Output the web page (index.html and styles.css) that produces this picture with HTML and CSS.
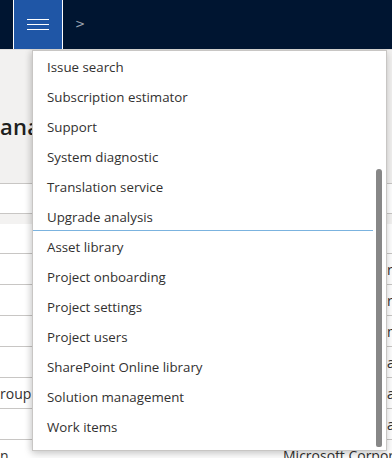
FILE: index.html
```html
<!DOCTYPE html>
<html>
<head>
<meta charset="utf-8">
<link rel="stylesheet" href="styles.css">
</head>
<body>
<header class="topbar">
  <button class="nav-btn" aria-label="Navigation">
    <svg width="22" height="12" viewBox="0 0 22 12"><path d="M0 0.5H22M0 5.5H22M0 10.5H22" stroke="#fff" stroke-width="1.2"/></svg>
  </button>
  <span class="crumb">&gt;</span>
</header>
<main class="page">
  <section class="title-area">
    <h1 class="title">anagement</h1>
  </section>
  <div class="grid">
    <div class="row"><span class="c1"></span><span class="c2"></span></div>
    <div class="row head"><span class="c1"></span><span class="c2"></span></div>
    <div class="row"><span class="c1"></span><span class="c2">rT</span></div>
    <div class="row"><span class="c1"></span><span class="c2">rT</span></div>
    <div class="row"><span class="c1"></span><span class="c2">m</span></div>
    <div class="row"><span class="c1"></span><span class="c2">a</span></div>
    <div class="row"><span class="c1">roup</span><span class="c2">a</span></div>
    <div class="row"><span class="c1"></span><span class="c2">a</span></div>
    <div class="row last"><span class="c1">n</span><span class="c2 vendor">Microsoft Corporation</span></div>
  </div>

  <nav class="menu">
    <ul class="group first">
      <li>Issue search</li>
      <li>Subscription estimator</li>
      <li>Support</li>
      <li>System diagnostic</li>
      <li>Translation service</li>
      <li>Upgrade analysis</li>
    </ul>
    <ul class="group second">
      <li>Asset library</li>
      <li>Project onboarding</li>
      <li>Project settings</li>
      <li>Project users</li>
      <li>SharePoint Online library</li>
      <li>Solution management</li>
      <li>Work items</li>
    </ul>
    <div class="scroll-thumb"></div>
  </nav>
</main>
</body>
</html>
```
FILE: styles.css
```css
* { box-sizing: border-box; }
html, body { margin: 0; padding: 0; }
body {
  width: 392px;
  height: 458px;
  overflow: hidden;
  font-family: "Open Sans", "Noto Sans", sans-serif;
  color: #323130;
  background: #fff;
}
.topbar {
  height: 49px;
  background: #001531;
  display: flex;
  align-items: center;
  padding-left: 13px;
}
.nav-btn {
  width: 50px;
  height: 49px;
  margin: 0;
  padding: 0;
  border: none;
  border-left: 1px solid #fff;
  border-right: 1px solid #fff;
  background: #1f56a6;
  display: flex;
  align-items: center;
  justify-content: center;
}
.crumb {
  margin-left: 12px;
  color: #9aa3b0;
  font-size: 12px;
  font-family: "DejaVu Sans", sans-serif;
  margin-top: -1px;
}
.page {
  position: relative;
  height: 409px;
  overflow: hidden;
}
.title-area {
  height: 135px;
  background: #f2f1f0;
  border-top: 1px solid #e1dfdd;
  border-bottom: 1px solid #c8c6c4;
  padding-top: 62px;
}
.title {
  margin: 0;
  font-size: 22px;
  font-weight: 600;
  color: #201f1e;
  line-height: 28px;
  letter-spacing: 0.2px;
}
.grid { display: flex; flex-direction: column; }
.row {
  height: 31px;
  border-bottom: 1px solid #c8c6c4;
  display: flex;
  align-items: center;
  font-size: 14px;
  color: #323130;
  white-space: nowrap;
}
.row:first-child { height: 30px; }
.row.head { height: 40px; background: linear-gradient(#f3f2f1 0 10px, #fff 10px); align-items: flex-start; }
.row .c1 { width: 100px; flex-shrink: 0; }
.row .c2 { margin-left: 287px; font-size: 14px; flex-shrink: 0; }
.row.last { border-bottom: none; align-items: flex-start; padding-top: 6px; height: 30px; }
.row.last .c2 { margin-left: 183px; }
.menu {
  position: absolute;
  left: 32px;
  top: 1px;
  width: 355px;
  height: 401px;
  background: #fff;
  border: 1px solid #c8c6c4;
  box-shadow: 0 3px 8px rgba(0,0,0,0.18), -2px 0 6px rgba(0,0,0,0.08);
  padding-top: 1px;
  overflow: hidden;
}
.group {
  list-style: none;
  margin: 0;
  padding: 0;
  width: 340px;
}
.group.first {
  height: 179px;
  border-bottom: 1px solid #7bb3df;
}
.group.second { margin-top: 1px; }
.group li {
  height: 30px;
  line-height: 30px;
  padding-left: 14px;
  font-size: 13.3px;
  color: #323130;
  white-space: nowrap;
}
.scroll-thumb {
  position: absolute;
  right: 4px;
  top: 118px;
  width: 6px;
  height: 278px;
  background: #878787;
  border-radius: 3px 3px 2px 2px;
}
```
